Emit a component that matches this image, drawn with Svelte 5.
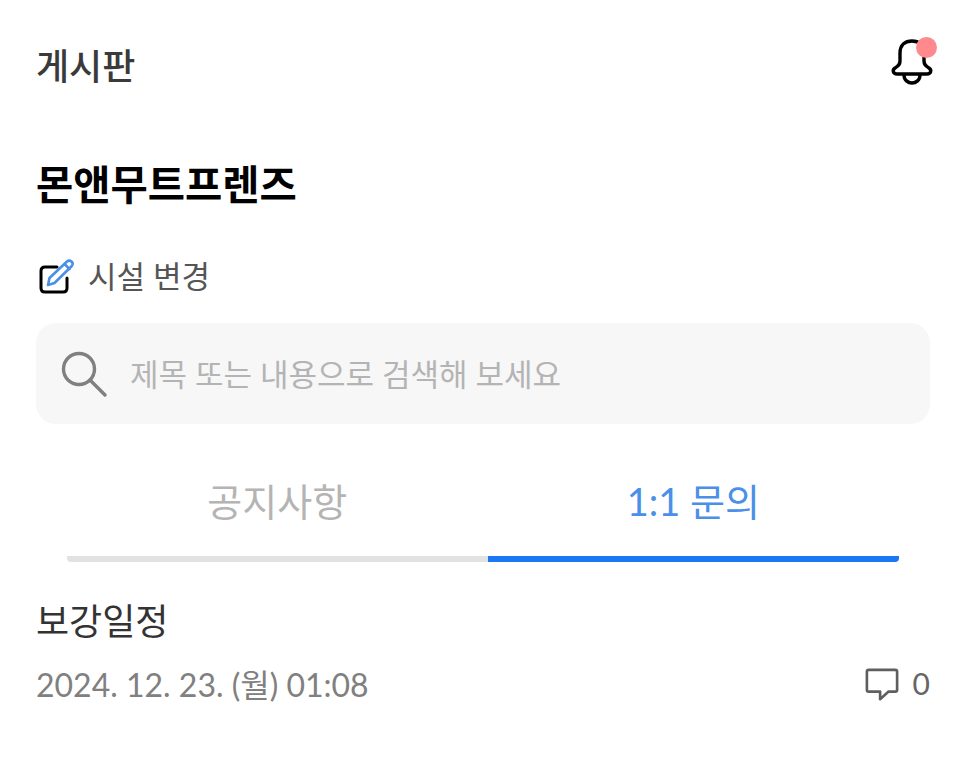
<script>
  const post = { title: '보강일정', date: '2024. 12. 23. (월) 01:08', comments: 0 };
</script>

<div class="page">
  <header class="topbar">
    <h1>게시판</h1>
    <button class="bell" aria-label="알림">
      <svg width="44" height="50" viewBox="0 0 44 50" fill="none" stroke="#000" stroke-width="3.4" stroke-linecap="round" stroke-linejoin="round">
        <path d="M10 24 V16 C10 8 15 4 22 4 C29 4 34 8 34 16 V24 C34 28 36 29 39 31 C42 33 41 37 37 37 H7 C3 37 2 33 5 31 C8 29 10 28 10 24 Z" />
        <path d="M14 38 C14 43 18 46 22 46 C26 46 30 43 30 38" />
      </svg>
      <span class="dot"></span>
    </button>
  </header>

  <h2 class="center">몬앤무트프렌즈</h2>

  <div class="change">
    <svg class="change-icon" width="38" height="38" viewBox="0 0 38 38" fill="none" stroke-linecap="round" stroke-linejoin="round">
      <path d="M19 9 H7 C4.5 9 3 10.5 3 13 V30 C3 32.5 4.5 34 7 34 H25 C27.5 34 29 32.5 29 30 V20" stroke="#000" stroke-width="3" />
      <path d="M10 27 L11.5 20 L29 3.5 C30.5 2.2 32 2.2 33.5 3.5 C35 5 35 6.5 33.8 8 L16.5 25 Z M26.5 6 L31.5 11" stroke="#4a8fe8" stroke-width="2.6" />
    </svg>
    <span class="change-label">시설 변경</span>
  </div>

  <div class="search">
    <svg width="48" height="48" viewBox="0 0 48 48" fill="none" stroke="#808080" stroke-width="3.4" stroke-linecap="round">
      <circle cx="19" cy="19" r="15.5" />
      <path d="M30 30 L45 45" />
    </svg>
    <span class="placeholder">제목 또는 내용으로 검색해 보세요</span>
  </div>

  <div class="tabs">
    <div class="tab">공지사항</div>
    <div class="tab active">1:1 문의</div>
  </div>

  <div class="post">
    <div class="post-title">{post.title}</div>
    <div class="post-meta">
      <span>{post.date}</span>
      <span class="comments">
        <svg class="comment-icon" width="34" height="34" viewBox="0 0 36 36" fill="none" stroke="#5f5f5f" stroke-width="2.8" stroke-linejoin="round">
          <path d="M4 2 H32 C33.2 2 34 2.8 34 4 V23 C34 24.2 33.2 25 32 25 H25 L16 33 V25 H4 C2.8 25 2 24.2 2 23 V4 C2 2.8 2.8 2 4 2 Z" />
        </svg>
        {post.comments}
      </span>
    </div>
  </div>
</div>

<style>
  :global(body) {
    background: #fff;
    font-family: Lato, "Noto Sans CJK KR", sans-serif;
  }

  .page {
    height: 784px;
    padding: 0 36px;
    box-sizing: border-box;
    overflow: hidden;
  }

  .topbar {
    height: 128px;
    display: flex;
    align-items: center;
    justify-content: space-between;
  }

  h1 {
    margin: 0;
    font-size: 36px;
    font-weight: 500;
    color: #3a3a3a;
  }

  .bell {
    position: relative;
    padding: 0;
    margin: 0 -4px 4px 0;
    border: 0;
    background: none;
    height: 50px;
  }

  .dot {
    position: absolute;
    top: 0;
    right: -3px;
    width: 21px;
    height: 21px;
    border-radius: 50%;
    background: #ff8a8e;
  }

  .center {
    margin: 31px 0 0;
    font-size: 40.5px;
    font-weight: 700;
    line-height: 52px;
    color: #000;
  }

  .change {
    display: flex;
    align-items: center;
    gap: 12px;
    margin-top: 42px;
    height: 44px;
    margin-left: 2px;
    font-size: 31px;
    color: #555;
  }

  .change-icon {
    margin-top: 4px;
  }

  .change-label {
    margin-bottom: 2px;
  }

  .search {
    display: flex;
    align-items: center;
    gap: 22px;
    height: 101px;
    margin-top: 26px;
    padding-left: 24px;
    border-radius: 20px;
    background: #f7f7f7;
    font-size: 31px;
    color: #b4b4b4;
  }

  .placeholder {
    margin-bottom: 3px;
  }

  .tabs {
    display: grid;
    grid-template-columns: 420fr 411fr;
    margin: 30px 31px 0;
    height: 108px;
  }

  .tab {
    display: flex;
    align-items: center;
    justify-content: center;
    padding-bottom: 12px;
    font-size: 38px;
    color: #b4b4b4;
    border-bottom: 6px solid #e2e2e2;
    border-radius: 4px 0 0 4px;
    box-sizing: border-box;
  }

  .tab.active {
    color: #4a8fe8;
    border-bottom-color: #1c78f2;
    border-radius: 0 4px 4px 0;
  }

  .post {
    margin-top: 34px;
  }

  .post-title {
    font-size: 36px;
    line-height: 50px;
    color: #333;
  }

  .post-meta {
    display: flex;
    justify-content: space-between;
    align-items: center;
    margin-top: 14px;
    font-size: 32px;
    color: #808080;
  }

  .comments {
    display: flex;
    align-items: center;
    gap: 14px;
    font-size: 30px;
    color: #666;
  }

  .comment-icon {
    margin-top: 4px;
  }
</style>
